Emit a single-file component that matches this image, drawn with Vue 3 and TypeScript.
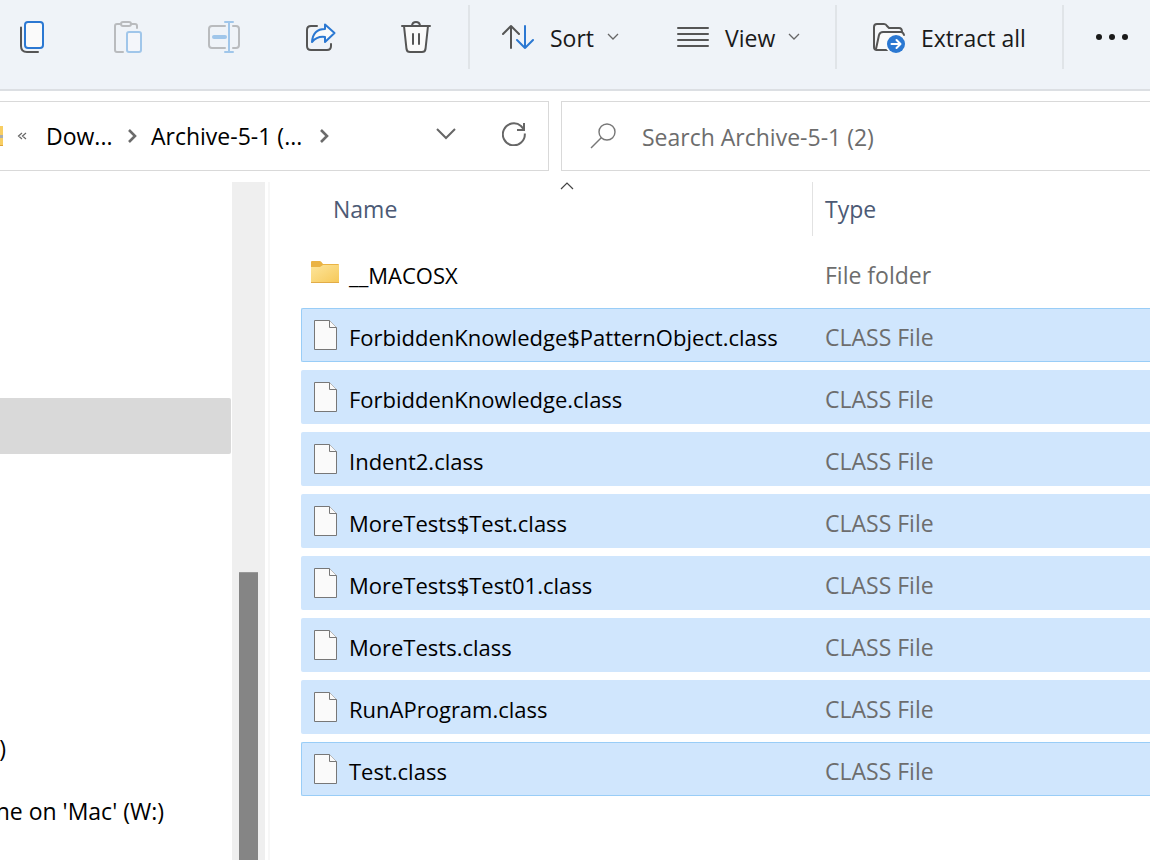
<script setup lang="ts">
import { ref } from 'vue'

interface Entry {
  name: string
  type: string
  folder?: boolean
  selected?: boolean
  outlined?: boolean
}

const entries: Entry[] = [
  { name: '__MACOSX', type: 'File folder', folder: true },
  { name: 'ForbiddenKnowledge$PatternObject.class', type: 'CLASS File', selected: true, outlined: true },
  { name: 'ForbiddenKnowledge.class', type: 'CLASS File', selected: true },
  { name: 'Indent2.class', type: 'CLASS File', selected: true },
  { name: 'MoreTests$Test.class', type: 'CLASS File', selected: true },
  { name: 'MoreTests$Test01.class', type: 'CLASS File', selected: true },
  { name: 'MoreTests.class', type: 'CLASS File', selected: true },
  { name: 'RunAProgram.class', type: 'CLASS File', selected: true },
  { name: 'Test.class', type: 'CLASS File', selected: true, outlined: true },
]

const query = ref('')
</script>

<template>
  <div class="explorer">
    <header class="toolbar">
      <div class="icon-group">
        <button class="tool" type="button" aria-label="Copy">
          <svg width="32" height="32" viewBox="0 0 32 32" fill="none" stroke-width="2" stroke-linecap="round">
            <path d="M5 6.500V25q0 6 6 6H22" stroke="#555" />
            <rect x="9" y="1" width="18" height="26" rx="3" fill="#fafafa" stroke="#2b78d2" />
          </svg>
        </button>
        <button class="tool" type="button" aria-label="Paste">
          <svg width="32" height="32" viewBox="0 0 32 32" fill="none" stroke-width="2" stroke-linecap="round">
            <path d="M8 3H5Q3 3 3 5V29q0 2 2 2H11M19 3h4q2 0 2 2V7" stroke="#b9bbbe" />
            <rect x="9" y="1" width="10" height="4" rx="2" stroke="#b9bbbe" />
            <rect x="15" y="11" width="14" height="20" rx="2" fill="#f4f6fa" stroke="#a0c6ea" />
          </svg>
        </button>
        <button class="tool" type="button" aria-label="Rename">
          <svg width="32" height="32" viewBox="0 0 32 32" fill="none" stroke-width="2" stroke-linecap="round">
            <path d="M17 5H4Q1 5 1 8V24q0 3 3 3H17M25 5h3q3 0 3 3V24q0 3-3 3H25" stroke="#b9bbbe" />
            <path d="M6 16H17" stroke="#a0c6ea" stroke-width="4" />
            <path d="M21 1V31M17 1h8M17 31h8" stroke="#a0c6ea" />
          </svg>
        </button>
        <button class="tool" type="button" aria-label="Share">
          <svg width="32" height="32" viewBox="0 0 32 32" fill="none" stroke-width="2" stroke-linecap="round" stroke-linejoin="round">
            <path d="M13 5H7Q3 5 3 9V25q0 4 4 4H23q4 0 4-4V23" stroke="#555" />
            <path d="M21 3.500L30.500 12L21 21V16Q13 15 8 21Q9 8 21 8Z" fill="#fafafa" stroke="#2b78d2" />
          </svg>
        </button>
        <button class="tool" type="button" aria-label="Delete">
          <svg width="32" height="32" viewBox="0 0 32 32" fill="none" stroke="#555" stroke-width="2" stroke-linecap="round">
            <path d="M4 5L6.500 28Q7 31 10 31H22Q25 31 25.500 28L28 5" fill="#fafafa" />
            <path d="M2 5H30M12 4.500Q12.500 1 16 1T20 4.500M13 13V23M19 13V23" />
          </svg>
        </button>
      </div>
      <span class="rule" />
      <button class="menu sort" type="button">
        <svg width="32" height="32" viewBox="0 0 32 32" fill="none" stroke-width="2" stroke-linecap="round" stroke-linejoin="round">
          <path d="M9 27V5M1 13L9 5l8 8" stroke="#555" />
          <path d="M23 5V27M15 19l8 8l8-8" stroke="#2b78d2" />
        </svg>
        <span>Sort</span>
        <svg class="caret" width="12" height="8" viewBox="0 0 12 8" fill="none" stroke="#666" stroke-width="1.300"><path d="M1 1L6 6L11 1" /></svg>
      </button>
      <button class="menu view" type="button">
        <svg width="32" height="32" viewBox="0 0 32 32" fill="none" stroke="#555" stroke-width="2" stroke-linecap="round">
          <path d="M1 7H31M1 13H31M1 19H31M1 25H31" />
        </svg>
        <span>View</span>
        <svg class="caret" width="12" height="8" viewBox="0 0 12 8" fill="none" stroke="#666" stroke-width="1.300"><path d="M1 1L6 6L11 1" /></svg>
      </button>
      <span class="rule" />
      <button class="menu extract" type="button">
        <svg width="32" height="32" viewBox="0 0 32 32" fill="none" stroke="#555" stroke-width="2" stroke-linecap="round" stroke-linejoin="round">
          <path d="M14 29H4Q1 29 1 26V6Q1 3 4 3H11Q13 3 14 5L16 7H26Q29 7 29 11" fill="#f4f6f9" />
          <path d="M3 28L6 14Q7 11 10 11H28Q30 11 31 14V29H4Z" fill="#fafafa" stroke="none" />
          <path d="M3 28L6 14Q7 11 10 11H28Q30 11 31 14M4 29H13" />
          <circle cx="23" cy="23" r="9" fill="#2b78d2" stroke="none" />
          <path d="M18.500 23H27M23.500 19L27.500 23L23.500 27" stroke="#fff" />
        </svg>
        <span>Extract all</span>
      </button>
      <span class="rule" />
      <button class="more" type="button" aria-label="See more">
        <svg width="32" height="8" viewBox="0 0 32 8" fill="#1a1a1a"><circle cx="3" cy="4" r="3" /><circle cx="16" cy="4" r="3" /><circle cx="29" cy="4" r="3" /></svg>
      </button>
    </header>

    <div class="location">
      <nav class="address" aria-label="Address">
        <svg width="3" height="20" viewBox="0 0 3 20"><path d="M0 0H3V20H0Z" fill="#f8ce62" /><path d="M0 9H3V12H0Z" fill="#a9adb0" /><path d="M0 19H3V20H0Z" fill="#dda33b" /></svg>
        <svg class="back" width="10" height="8" viewBox="0 0 10 8" fill="none" stroke="#666" stroke-width="1.200"><path d="M5 1L1.500 4L5 7M9 1L5.500 4L9 7" /></svg>
        <a class="crumb first" href="#">Dow...</a>
        <svg class="sep" width="10" height="14" viewBox="0 0 10 14" fill="none" stroke="#6b6b6b" stroke-width="2.600"><path d="M2 1L8 7L2 13" /></svg>
        <a class="crumb second" href="#">Archive-5-1 (...</a>
        <svg class="sep" width="10" height="14" viewBox="0 0 10 14" fill="none" stroke="#6b6b6b" stroke-width="2.600"><path d="M2 1L8 7L2 13" /></svg>
        <div class="address-actions">
          <button type="button" aria-label="Previous locations">
            <svg width="20" height="12" viewBox="0 0 20 12" fill="none" stroke="#666" stroke-width="2"><path d="M1 1L10 10L19 1" /></svg>
          </button>
          <button type="button" aria-label="Refresh">
            <svg width="24" height="24" viewBox="0 0 24 24" fill="none" stroke="#666" stroke-width="2"><path d="M22.800 11.500A11 11 0 1 1 19 4L22 7.500M22 1V8H15" /></svg>
          </button>
        </div>
      </nav>
      <label class="search">
        <svg width="26" height="26" viewBox="0 0 26 26" fill="none" stroke="#777" stroke-width="1.400"><circle cx="17" cy="9" r="8" /><path d="M11.500 14.500L1 25" /></svg>
        <input v-model="query" type="text" aria-label="Search" placeholder="Search Archive-5-1 (2)" />
      </label>
    </div>

    <main class="body">
      <aside class="sidebar">
        <div class="place current" />
        <div class="place drive">)</div>
        <div class="place mount">ne on 'Mac' (W:)</div>
      </aside>
      <div class="track"><div class="thumb" /></div>
      <section class="files">
        <svg class="sort-mark" width="14" height="8" viewBox="0 0 14 8" fill="none" stroke="#444" stroke-width="1.200"><path d="M1 7L7 1L13 7" /></svg>
        <table>
          <colgroup><col class="col-name" /><col /></colgroup>
          <thead>
            <tr><th scope="col">Name</th><th scope="col">Type</th></tr>
          </thead>
          <tbody>
            <tr v-for="entry in entries" :key="entry.name" :class="{ directory: entry.folder, selected: entry.selected, outlined: entry.outlined }">
              <td>
                <div class="name">
                  <svg v-if="entry.folder" class="folder" width="28" height="22" viewBox="0 0 28 22">
                    <defs><linearGradient id="folder-face" x1="0" y1="0" x2="1" y2="1"><stop offset="0" stop-color="#fde59b" /><stop offset="1" stop-color="#f6c858" /></linearGradient></defs>
                    <path d="M0 1Q0 0 1 0H9Q10 0 12 3H27Q28 3 28 4V10H0Z" fill="#eab344" />
                    <path d="M0 6H9L12 4H28V21Q28 22 27 22H1Q0 22 0 21Z" fill="url(#folder-face)" />
                    <path d="M0 21.500H28" stroke="#e2ac47" stroke-width="1" />
                  </svg>
                  <svg v-else class="file" width="23" height="30" viewBox="0 0 23 30" fill="#fafafa" stroke="#777" stroke-width="1">
                    <path d="M.5.5H15.500L22.500 7.500V29.500H.5Z" /><path d="M15.500.5V7.500H22.500" />
                  </svg>
                  <span>{{ entry.name }}</span>
                </div>
              </td>
              <td>{{ entry.type }}</td>
            </tr>
          </tbody>
        </table>
      </section>
    </main>
  </div>
</template>

<style>
html, body { margin: 0; background: #fff; }
</style>

<style scoped>
.explorer {
  display: flex;
  flex-direction: column;
  min-height: 100vh;
  overflow: hidden;
  font: 23px/32px "Open Sans", "Noto Sans", sans-serif;
  color: #000;
}
svg { display: block; flex: none; }
button { padding: 0; border: 0; background: none; font: inherit; color: inherit; }
.toolbar {
  display: flex;
  align-items: center;
  box-sizing: border-box;
  height: 91px;
  padding-bottom: 15px;
  border-bottom: 2px solid #dcdfe3;
  background: #eff3f8;
  color: #1a1a1a;
}
.icon-group { display: flex; gap: 32px; }
.tool { display: grid; place-items: center; width: 64px; height: 64px; }
.rule { width: 2px; height: 64px; background: #e0e4e8; }
.icon-group + .rule { margin-left: 20px; }
.menu { display: flex; align-items: center; gap: 16px; height: 64px; white-space: nowrap; }
.menu span { padding-top: 2px; }
.menu .caret { margin-left: -3px; }
.sort { width: 175px; padding-left: 32px; }
.view { width: 190px; padding-left: 32px; }
.extract { width: 225px; padding-left: 36px; }
.more { margin-left: 32px; }

.location {
  display: grid;
  grid-template-columns: minmax(0, 549fr) minmax(0, 589fr);
  gap: 12px;
  padding: 10px 0 11px;
}
.address, .search {
  display: flex;
  align-items: center;
  box-sizing: border-box;
  height: 70px;
  border: 1px solid #d9d9d9;
}
.address { border-left: 0; }
.search { border-right: 0; }
.back { margin-left: 14px; }
.crumb { color: #000; text-decoration: none; white-space: nowrap; }
.first { width: 81px; margin-left: 19px; }
.second { width: 168px; margin-left: 14px; }
.address-actions { display: flex; align-items: center; gap: 46px; margin: 0 22px 4px auto; }
.search svg { margin-left: 28px; }
.search input {
  flex: 1;
  min-width: 0;
  margin-left: 26px;
  padding: 1px 0 0;
  border: 0;
  outline: 0;
  background: none;
  font: inherit;
}
.search input::placeholder { color: #6d6d6d; opacity: 1; }

.body { display: flex; flex: 1; }
.sidebar { flex: none; width: 232px; padding-top: 216px; box-sizing: border-box; overflow: hidden; }
.place { box-sizing: border-box; display: flex; align-items: center; justify-content: flex-end; height: 56px; white-space: nowrap; }
.current { margin-right: 1px; border-radius: 0 2px 2px 0; background: #d9d9d9; }
.drive { margin-top: 266px; padding-right: 226px; }
.mount { margin-top: 7px; padding-right: 68px; }
.track { display: flex; flex: none; width: 33px; padding: 390px 7px 0; box-sizing: border-box; background: #efefef; }
.thumb { flex: 1; background: #858585; border-top: 1px solid #999; }
.files { position: relative; flex: 1; min-width: 0; margin-left: 3px; padding-left: 31px; border-left: 2px solid #f7f7f7; }
.sort-mark { position: absolute; top: 0; left: 290px; }
table { width: 100%; table-layout: fixed; border-spacing: 0 8px; margin-top: -8px; }
.col-name { width: 511px; }
th, td { box-sizing: border-box; height: 54px; padding: 0; text-align: left; font-weight: 400; white-space: nowrap; }
th { padding: 0 0 0 32px; color: #4c5a75; }
th + th { padding-left: 12px; border-left: 1px solid #e2e2e2; }
td { padding-top: 4px; }
td + td { padding-left: 13px; color: #6d6d6d; }
.directory td { height: 56px; padding-top: 6px; }
.selected td { background: #d0e6fd; }
.selected td:first-child { border-radius: 2px 0 0 2px; }
.outlined td { border: solid #99cdf7; border-width: 1px 0; }
.outlined td:first-child { border-left-width: 1px; }
.name { display: flex; align-items: center; font-size: 22px; }
.file { margin: 0 12px 4px 13px; }
.outlined .file { margin-left: 12px; }
.folder { margin: 0 10px 6px 10px; }
</style>
